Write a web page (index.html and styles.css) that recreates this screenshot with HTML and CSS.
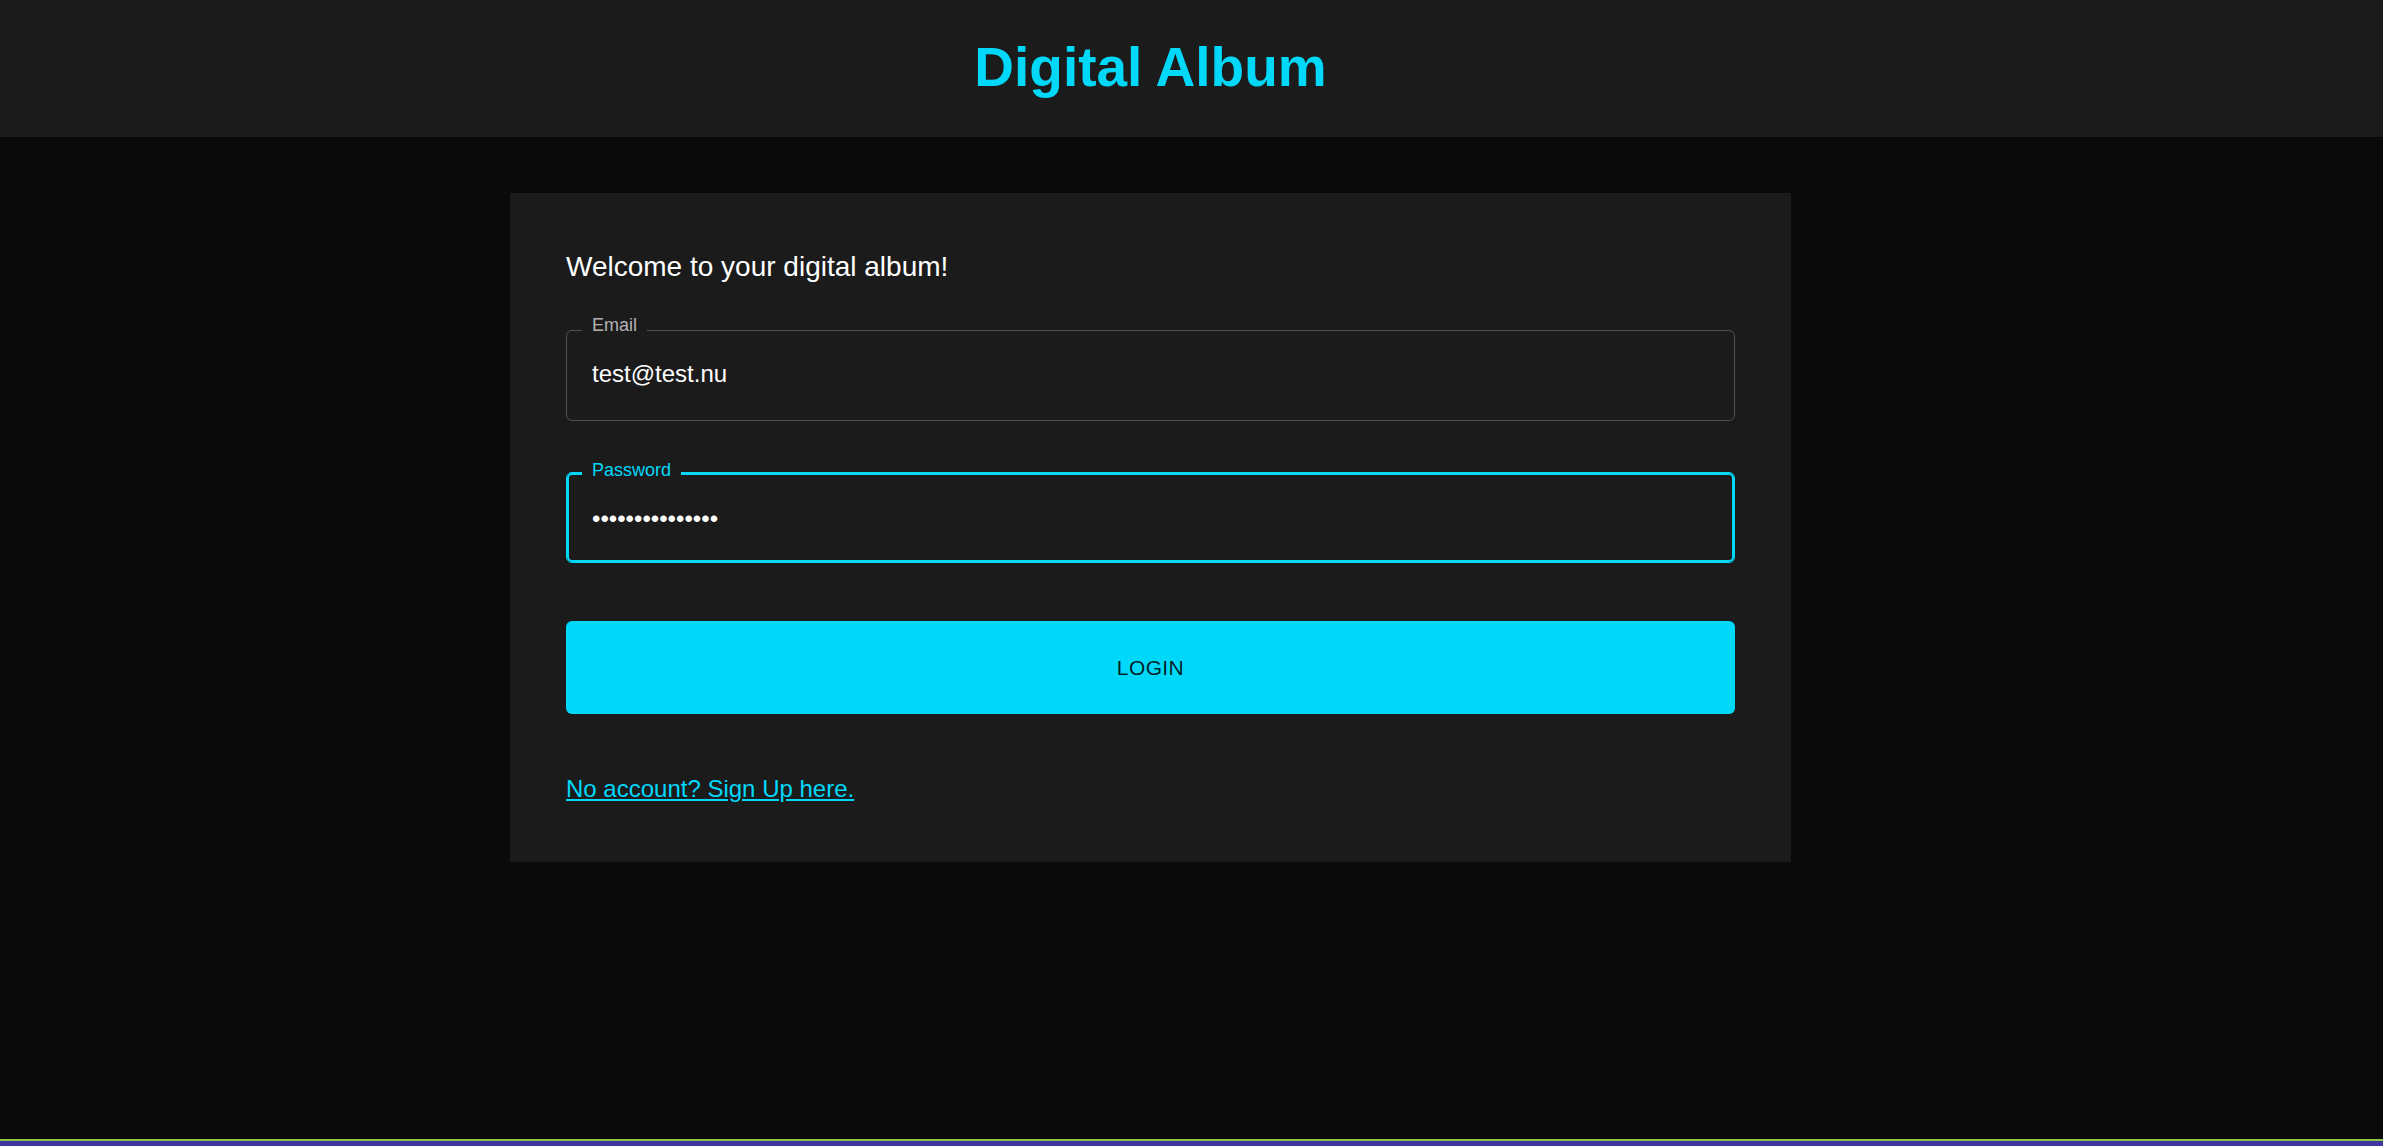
FILE: index.html
```html
<!DOCTYPE html>
<html lang="en">
<head>
<meta charset="utf-8">
<title>Digital Album</title>
<link rel="stylesheet" href="styles.css">
</head>
<body>
<header class="topbar">
  <h1 class="brand">Digital Album</h1>
</header>
<main class="main">
  <section class="card">
    <h2 class="welcome">Welcome to your digital album!</h2>
    <form class="login-form" onsubmit="return false">
      <div class="field field--email">
        <label class="field-label" for="email">Email</label>
        <input class="field-input" id="email" type="email" value="test@test.nu">
      </div>
      <div class="field field--focused">
        <label class="field-label" for="password">Password</label>
        <input class="field-input field-input--password" id="password" type="password" value="testtesttesttes" autofocus>
      </div>
      <button class="btn-login" type="submit">Login</button>
    </form>
    <a class="signup-link" href="#">No account? Sign Up here.</a>
  </section>
</main>
<footer class="footer"></footer>
</body>
</html>
```

FILE: styles.css
```css
* { box-sizing: border-box; }

html, body { height: 100%; }

body {
  margin: 0;
  min-height: 100vh;
  display: flex;
  flex-direction: column;
  background: #0a0a0a;
  color: #ffffff;
  font-family: "Liberation Sans", Arial, sans-serif;
  font-size: 24px;
}

.topbar {
  height: 137px;
  flex: 0 0 auto;
  background: #1b1b1b;
  display: flex;
  align-items: center;
  justify-content: center;
  padding: 0 82px 3px 0;
}

.brand {
  margin: 0;
  font-size: 55px;
  font-weight: 700;
  line-height: normal;
  color: #00d8fa;
}

.main {
  flex: 1 0 auto;
  padding: 56px 82px 0 0;
  display: flex;
  justify-content: center;
  align-items: flex-start;
}

.card {
  width: 1281px;
  background: #1b1b1b;
  padding: 58px 56px 59px;
}

.welcome {
  margin: 0 0 47px;
  font-size: 28px;
  font-weight: 400;
  line-height: 32px;
  color: #ffffff;
}

.login-form {
  display: flex;
  flex-direction: column;
}

.field {
  position: relative;
  height: 91px;
  border: 1px solid #4f4f4f;
  border-radius: 6px;
  display: flex;
}

.field--email { margin-bottom: 51px; }

.field--focused {
  border-color: #00d8fa;
  box-shadow: inset 0 0 0 2px #00d8fa;
  margin-bottom: 58px;
}

.field-label {
  position: absolute;
  top: -15px;
  left: 15px;
  padding: 0 10px;
  font-size: 18px;
  line-height: 18px;
  color: #b3b3b3;
  background: #1b1b1b;
}

.field--focused .field-label {
  top: -12px;
  color: #00d8fa;
}

.field-input {
  flex: 1;
  width: 100%;
  height: 100%;
  margin: 0;
  padding: 0 24px 3px 25px;
  border: 0;
  outline: none;
  background: transparent;
  color: #ffffff;
  font-family: "Liberation Sans", Arial, sans-serif;
  font-size: 24px;
  caret-color: #ffffff;
}

.field-input--password {
  padding-top: 3px;
  padding-bottom: 0;
}

.btn-login {
  height: 93px;
  margin: 0 0 61px;
  border: 0;
  border-radius: 6px;
  background: #00d8fa;
  color: rgba(0, 0, 0, 0.87);
  font-family: "Liberation Sans", Arial, sans-serif;
  font-size: 21px;
  font-weight: 400;
  letter-spacing: 0.4px;
  text-transform: uppercase;
  cursor: pointer;
}

.signup-link {
  display: inline-block;
  font-size: 24px;
  line-height: normal;
  color: #00d8fa;
  text-decoration: underline;
}

.footer {
  flex: 0 0 auto;
  height: 7px;
  border-top: 2px solid #8bc34a;
  background: #3f36a2;
}
```
